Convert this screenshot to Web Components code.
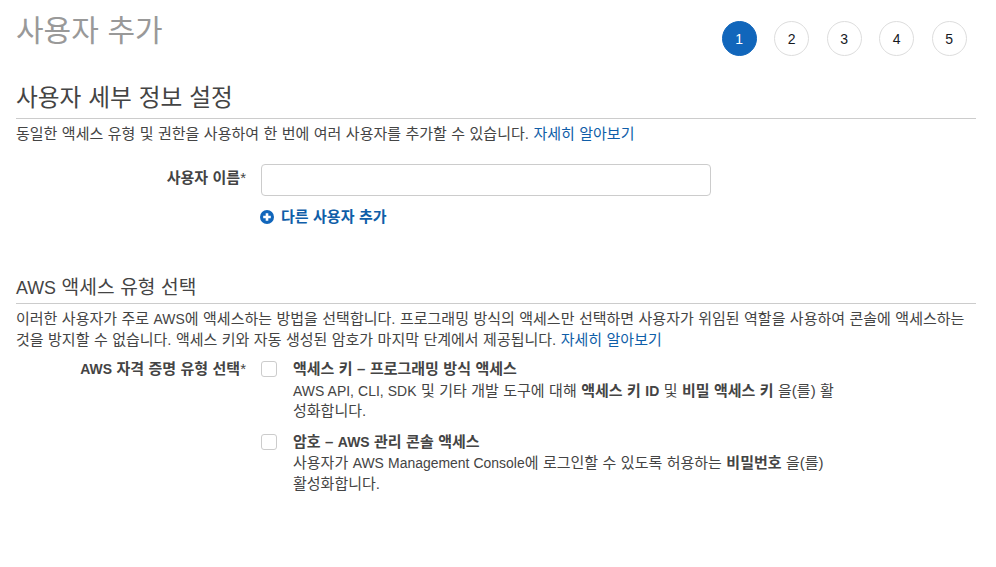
<!DOCTYPE html>
<html lang="ko"><head><meta charset="utf-8">
<style>
html,body{margin:0;background:#fff}
body{font-family:"Liberation Sans","Noto Sans CJK KR",sans-serif;font-size:15px;word-spacing:.28px;color:#444;width:996px;height:567px;overflow:hidden}
.la{font-size:.93em}
</style></head><body>
<wizard-header>사용자 추가</wizard-header>
<form-section variant="first"><span slot="heading">사용자 세부 정보 설정</span>
  <span>동일한 액세스 유형 및 권한을 사용하여 한 번에 여러 사용자를 추가할 수 있습니다. <a-link>자세히 알아보기</a-link></span>
</form-section>
<user-row><span slot="label">사용자 이름</span><span slot="add">다른 사용자 추가</span></user-row>
<form-section variant="second"><span slot="heading"><span class="la">AWS</span> 액세스 유형 선택</span>
  <span>이러한 사용자가 주로 <span class="la">AWS</span>에 액세스하는 방법을 선택합니다. 프로그래밍 방식의 액세스만 선택하면 사용자가 위임된 역할을 사용하여 콘솔에 액세스하는 것을 방지할 수 없습니다. 액세스 키와 자동 생성된 암호가 마지막 단계에서 제공됩니다. <a-link>자세히 알아보기</a-link></span>
</form-section>
<cred-row><span slot="label"><span class="la">AWS</span> 자격 증명 유형 선택</span>
  <cred-option><span slot="title">액세스 키 – 프로그래밍 방식 액세스</span><span class="la">AWS API, CLI, SDK</span> 및 기타 개발 도구에 대해 <b>액세스 키 <span class="la">ID</span></b> 및 <b>비밀 액세스 키</b> 을(를) 활성화합니다.</cred-option>
  <cred-option><span slot="title">암호 – <span class="la">AWS</span> 관리 콘솔 액세스</span>사용자가 <span class="la">AWS Management Console</span>에 로그인할 수 있도록 허용하는 <b>비밀번호</b> 을(를) 활성화합니다.</cred-option>
</cred-row>
<script>
function def(name, html){
  customElements.define(name, class extends HTMLElement{
    connectedCallback(){
      if(this.shadowRoot) return;
      this.attachShadow({mode:'open'}).innerHTML=html;
    }
  });
}
def('a-link','<style>:host{display:inline;color:#0f5ea8}</style><slot></slot>');
def('step-dot','<style>:host{display:flex;box-sizing:border-box;width:35px;height:35px;border-radius:50%;border:1px solid #ddd;align-items:center;justify-content:center;font-size:14px;color:#16191f;background:#fff}:host([active]){background:#1166bb;border-color:#1166bb;color:#fff}</style><slot></slot>');
def('wizard-header',`<style>:host{display:flex;justify-content:space-between;align-items:flex-start;height:83px;padding:0 29.25px 0 16px}
h1{margin:13px 0 0;font-size:30px;line-height:36px;font-weight:400;color:#999}
.steps{display:flex;gap:17.5px;margin-top:21px}</style>
<h1><slot></slot></h1><div class="steps"><step-dot active>1</step-dot><step-dot>2</step-dot><step-dot>3</step-dot><step-dot>4</step-dot><step-dot>5</step-dot></div>`);
def('form-section',`<style>:host{display:block;margin:0 20px 0 16px}
:host([variant=second]){margin-top:49px}
h2{margin:0;font-weight:400;color:#444;border-bottom:1px solid #ccc}
:host([variant=first]) h2{font-size:23.7px;line-height:30px;padding-bottom:5px}
:host([variant=second]) h2{font-size:19.2px;line-height:24px;padding-bottom:3px}
.d{line-height:21px;padding-top:4px}
:host([variant=second]) .d{line-height:20.5px;padding-top:5px}</style>
<h2><slot name="heading"></slot></h2><div class="d"><slot></slot></div>`);
def('user-row',`<style>:host{display:grid;grid-template-columns:246px 450px;column-gap:15px;margin-top:20px}
.l{font-weight:700;text-align:right;line-height:27px}
.l i{font-style:normal;font-weight:400}
.i{box-sizing:border-box;height:32px;border:1px solid #ccc;border-radius:4px;background:#fff;display:block;width:100%;padding:0;margin:0}
.add{display:flex;align-items:center;gap:7px;margin-top:11px;color:#0f5ea8;font-weight:700;line-height:20px;grid-column:2}
svg{display:block;margin-left:-1px}</style>
<div class="l"><slot name="label"></slot><i>*</i></div><input class="i" aria-label="사용자 이름">
<div class="add"><svg width="14" height="14" viewBox="0 0 14 14"><circle cx="7" cy="7" r="7" fill="#1166bb"/><path d="M7 3.2v7.6M3.2 7h7.6" stroke="#fff" stroke-width="2.6"/></svg><slot name="add"></slot></div>`);
def('cred-row',`<style>:host{display:grid;grid-template-columns:246px 1fr;column-gap:15px;margin-top:9px}
.l{font-weight:700;text-align:right;line-height:20px}.l i{font-style:normal;font-weight:400}
.o{display:flex;flex-direction:column;gap:10px}</style>
<div class="l"><slot name="label"></slot><i>*</i></div><div class="o"><slot></slot></div>`);
def('cred-option',`<style>:host{display:grid;grid-template-columns:16px 542px;column-gap:16px;line-height:20.5px}
.c{box-sizing:border-box;width:16px;height:16px;border:1px solid #ccc;border-radius:3px;margin-top:2px;background:#fff}
.t{font-weight:700;padding-bottom:1px}</style>
<div class="c"></div><div><div class="t"><slot name="title"></slot></div><slot></slot></div>`);
</script>
</body></html>
